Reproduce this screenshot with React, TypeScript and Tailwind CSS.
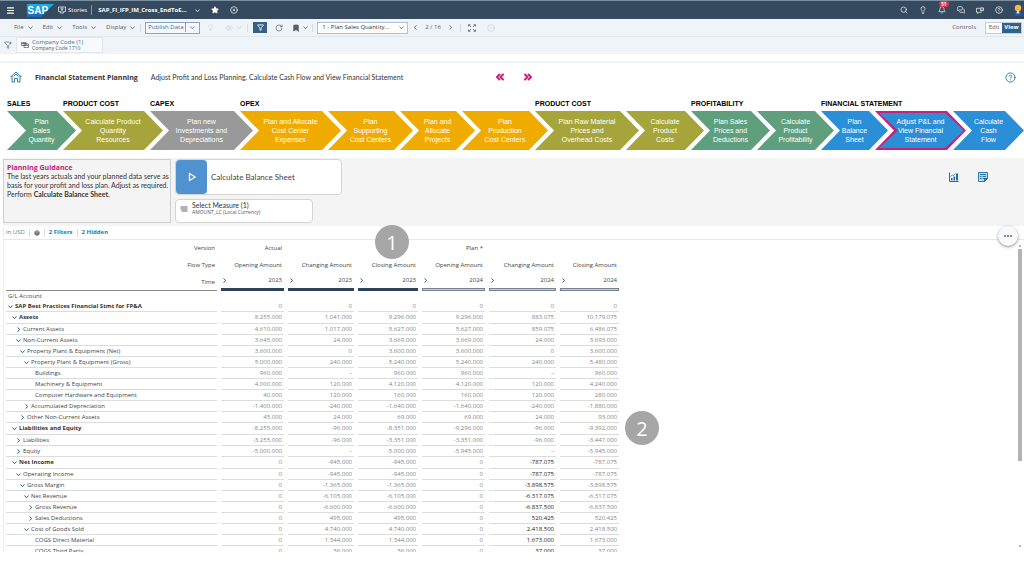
import type { ReactNode } from 'react'
import clsx from 'clsx'
import {
  Bell,
  Bookmark,
  ChevronsLeft,
  ChevronsRight,
  CircleCheck,
  CircleHelp,
  CircleX,
  Ellipsis,
  Filter,
  FunnelPlus,
  Lightbulb,
  Menu,
  MessagesSquare,
  RotateCw,
  Search,
  Star,
} from 'lucide-react'

// One arrow of the planning process
interface Step {
  lines: string[]
  color: string
  selected?: boolean
}

const GREEN = 'bg-[#5f9f7e]'
const OLIVE = 'bg-[#a5a53c]'
const GREY = 'bg-[#999999]'
const AMBER = 'bg-[#f0ab00]'
const BLUE = 'bg-[#2a8fd6]'

const STEPS: Step[] = [
  { lines: ['Plan', 'Sales', 'Quantity'], color: GREEN },
  { lines: ['Calculate Product', 'Quantity', 'Resources'], color: OLIVE },
  { lines: ['Plan new', 'Investments and', 'Depreciations'], color: GREY },
  { lines: ['Plan and Allocate', 'Cost Center', 'Expenses'], color: AMBER },
  { lines: ['Plan', 'Supporting', 'Cost Centers'], color: AMBER },
  { lines: ['Plan and', 'Allocate', 'Projects'], color: AMBER },
  { lines: ['Plan', 'Production', 'Cost Centers'], color: AMBER },
  { lines: ['Plan Raw Material', 'Prices and', 'Overhead Costs'], color: OLIVE },
  { lines: ['Calculate', 'Product', 'Costs'], color: OLIVE },
  { lines: ['Plan Sales', 'Prices and', 'Deductions'], color: GREEN },
  { lines: ['Calculate', 'Product', 'Profitability'], color: GREEN },
  { lines: ['Plan', 'Balance', 'Sheet'], color: BLUE },
  { lines: ['Adjust P&L and', 'View Financial', 'Statement'], color: BLUE, selected: true },
  { lines: ['Calculate', 'Cash', 'Flow'], color: BLUE },
]

const GROUPS = [
  { label: 'SALES', span: 'col-span-1' },
  { label: 'PRODUCT COST', span: 'col-span-1' },
  { label: 'CAPEX', span: 'col-span-1' },
  { label: 'OPEX', span: 'col-span-4' },
  { label: 'PRODUCT COST', span: 'col-span-2' },
  { label: 'PROFITABILITY', span: 'col-span-2' },
  { label: 'FINANCIAL STATEMENT', span: 'col-span-3' },
]

interface Row {
  name: string
  level: number
  open?: boolean
  values: string[]
}

const ROWS: Row[] = [
  { name: 'SAP Best Practices Financial Stmt for FP&A', level: 0, open: true, values: ['0', '0', '0', '0', '0', '0'] },
  { name: 'Assets', level: 1, open: true, values: ['8.255.000', '1.041.000', '9.296.000', '9.296.000', '883.075', '10.179.075'] },
  { name: 'Current Assets', level: 2, open: false, values: ['4.610.000', '1.017.000', '5.627.000', '5.627.000', '859.075', '6.486.075'] },
  { name: 'Non-Current Assets', level: 2, open: true, values: ['3.645.000', '24.000', '3.669.000', '3.669.000', '24.000', '3.693.000'] },
  { name: 'Property Plant & Equipment (Net)', level: 3, open: true, values: ['3.600.000', '0', '3.600.000', '3.600.000', '0', '3.600.000'] },
  { name: 'Property Plant & Equipment (Gross)', level: 4, open: true, values: ['5.000.000', '240.000', '5.240.000', '5.240.000', '240.000', '5.480.000'] },
  { name: 'Buildings', level: 5, values: ['960.000', '–', '960.000', '960.000', '–', '960.000'] },
  { name: 'Machinery & Equipment', level: 5, values: ['4.000.000', '120.000', '4.120.000', '4.120.000', '120.000', '4.240.000'] },
  { name: 'Computer Hardware and Equipment', level: 5, values: ['40.000', '120.000', '160.000', '160.000', '120.000', '280.000'] },
  { name: 'Accumulated Depreciation', level: 4, open: false, values: ['-1.400.000', '-240.000', '-1.640.000', '-1.640.000', '-240.000', '-1.880.000'] },
  { name: 'Other Non-Current Assets', level: 3, open: false, values: ['45.000', '24.000', '69.000', '69.000', '24.000', '93.000'] },
  { name: 'Liabilities and Equity', level: 1, open: true, values: ['-8.255.000', '-96.000', '-8.351.000', '-9.296.000', '-96.000', '-9.392.000'] },
  { name: 'Liabilities', level: 2, open: false, values: ['-3.255.000', '-96.000', '-3.351.000', '-3.351.000', '-96.000', '-3.447.000'] },
  { name: 'Equity', level: 2, open: false, values: ['-5.000.000', '–', '-5.000.000', '-5.945.000', '–', '-5.945.000'] },
  { name: 'Net Income', level: 1, open: true, values: ['0', '-945.000', '-945.000', '0', '-787.075', '-787.075'] },
  { name: 'Operating Income', level: 2, open: true, values: ['0', '-945.000', '-945.000', '0', '-787.075', '-787.075'] },
  { name: 'Gross Margin', level: 3, open: true, values: ['0', '-1.365.000', '-1.365.000', '0', '-3.898.575', '-3.898.575'] },
  { name: 'Net Revenue', level: 4, open: true, values: ['0', '-6.105.000', '-6.105.000', '0', '-6.317.075', '-6.317.075'] },
  { name: 'Gross Revenue', level: 5, open: false, values: ['0', '-6.600.000', '-6.600.000', '0', '-6.837.500', '-6.837.500'] },
  { name: 'Sales Deductions', level: 5, open: false, values: ['0', '495.000', '495.000', '0', '520.425', '520.425'] },
  { name: 'Cost of Goods Sold', level: 4, open: true, values: ['0', '4.740.000', '4.740.000', '0', '2.418.500', '2.418.500'] },
  { name: 'COGS Direct Material', level: 5, values: ['0', '1.344.000', '1.344.000', '0', '1.673.000', '1.673.000'] },
  { name: 'COGS Third Party', level: 5, values: ['0', '36.000', '36.000', '0', '37.000', '37.000'] },
]

// From this row on, the planned changes can be edited (dark figures)
const FIRST_EDITABLE = ROWS.findIndex(r => r.name === 'Net Income')
const EDITABLE_COL = 4

const COLUMNS = [
  { version: 'Actual', flow: 'Opening Amount', year: '2023' },
  { version: '', flow: 'Changing Amount', year: '2023' },
  { version: '', flow: 'Closing Amount', year: '2023' },
  { version: 'Plan *', flow: 'Opening Amount', year: '2024' },
  { version: '', flow: 'Changing Amount', year: '2024' },
  { version: '', flow: 'Closing Amount', year: '2024' },
]

const INDENT = ['pl-[2px]', 'pl-[6px]', 'pl-[10px]', 'pl-[14px]', 'pl-[18px]', 'pl-[22px]']

// Tight chevron: the stroke fills the whole box, unlike the padded lucide one
const CARETS = {
  down: 'M1 3 5 7.500 9 3',
  right: 'M3 1 7.500 5 3 9',
  left: 'M7 1 2.500 5 7 9',
}

function Caret({ dir = 'down', bold, className }: { dir?: keyof typeof CARETS; bold?: boolean; className?: string }) {
  return (
    <svg viewBox="0 0 10 10" className={clsx('size-[5px] shrink-0', className)} fill="none" stroke="currentColor" strokeWidth={bold ? 2 : 1.6}>
      <path d={CARETS[dir]} />
    </svg>
  )
}

function Logo() {
  return (
    <svg viewBox="0 0 54 26" className="h-[13px] w-[27px]" role="img" aria-label="SAP">
      <defs>
        <linearGradient id="sap" x1="0" y1="0" x2="0" y2="1">
          <stop offset="0" stopColor="#16b4ee" />
          <stop offset="1" stopColor="#1a66b8" />
        </linearGradient>
      </defs>
      <path d="M0 0H54L28 26H0Z" fill="url(#sap)" />
      <text x="1" y="20" fill="#fff" fontFamily="Liberation Sans, sans-serif" fontWeight="700" fontSize="20">
        SAP
      </text>
    </svg>
  )
}

function StoriesIcon() {
  return (
    <svg viewBox="0 0 16 16" className="size-[8px]" fill="none" stroke="currentColor" strokeWidth="1.4">
      <path d="M4 11H1V2h14v9h-3M6 5.5a2 2 0 1 0 4 0a2 2 0 1 0-4 0M4.500 14c0-3 1.500-4.500 3.500-4.500s3.500 1.500 3.500 4.500Z" />
    </svg>
  )
}

function HomeIcon() {
  return (
    <svg viewBox="0 0 24 24" className="size-[12px]" fill="none" stroke="currentColor" strokeWidth="2">
      <path d="M1 12 12 2l11 10M4 10v12h5v-7h6v7h5V10M7 11l5-5 5 5" />
    </svg>
  )
}

function ExpandIcon() {
  return (
    <svg viewBox="0 0 16 16" className="size-[8px]" fill="none" stroke="currentColor" strokeWidth="1.600">
      <path d="M1 5V1.500h4M1.500 1.500 6 6M11 1.500h4V5M14.500 1.500 10 6M1 11v3.500h4M1.500 14.500 6 10M11 14.500h4V11M14.500 14.500 10 10" />
    </svg>
  )
}

function CubeIcon() {
  return (
    <svg viewBox="0 0 16 16" className="size-[6px]" fill="#666" stroke="#444" strokeWidth="1">
      <path d="M8 1 14 4.500v7L8 15l-6-3.500v-7Z" />
      <path d="M2 4.500 8 8l6-3.500M8 8v7M5 2.700l6 3.500M11 2.700 5 6.200" stroke="#ddd" fill="none" />
    </svg>
  )
}

function DimensionIcon() {
  return (
    <svg viewBox="0 0 16 12" className="h-[6px] w-[8px] shrink-0" fill="none" stroke="currentColor" strokeWidth="1.400">
      <path d="M1 1h9v6H1ZM4 3.500h9M6 4h9v7H6Z" />
      <path d="M1 3h9M6 7h9" />
    </svg>
  )
}

function MeasureIcon() {
  return (
    <svg viewBox="0 0 16 12" className="h-[6px] w-[8px] shrink-0" fill="none" stroke="currentColor" strokeWidth="1.800">
      <path d="M1 2h14M1 6h14M3 10h12" />
    </svg>
  )
}

function ChartIcon() {
  return (
    <svg viewBox="0 0 20 20" className="size-[10px]" fill="#1a6fa5" stroke="#1a6fa5">
      <path d="M1 1v18h18" fill="none" strokeWidth="2" />
      <path d="M4 12h3v5H4ZM9 9h3v8H9ZM14 3h4v14h-4Z" stroke="none" />
      <path d="m3 9 4-3 3 1 3-4" fill="none" strokeWidth="1.400" />
    </svg>
  )
}

function ReportIcon() {
  return (
    <svg viewBox="0 0 20 20" className="size-[10px]" fill="none" stroke="#2273a8" strokeWidth="1.800">
      <path d="M1 1h18v11l-6 7H1Z" fill="#b9d4e6" />
      <path d="M4 5h12M4 9h3M9 9h7M4 13h3M9 13h3M13 19v-6h6" />
      <path d="M13 19v-6h6Z" fill="#2273a8" />
    </svg>
  )
}

function PresenterIcon() {
  return (
    <svg viewBox="0 0 18 16" className="h-[7px] w-[8px]" fill="none" stroke="currentColor" strokeWidth="1.600">
      <path d="M9 3H1v9h3v3l3-3h5v-2M10 2h7v6h-7ZM12 5h3" />
    </svg>
  )
}

function Avatar() {
  return (
    <svg viewBox="0 0 16 24" className="h-[12px] w-[8px]" role="img" aria-label="User">
      <path d="M0 24c0-7 3-9 8-9s8 2 8 9Z" fill="#1f56b5" />
      <circle cx="8" cy="8" r="6.500" fill="#f5b54a" />
      <path d="M6 13h4l1 6H5Z" fill="#f7d9a0" />
    </svg>
  )
}

function Divider() {
  return <span className="h-[8px] w-px bg-[#d5dce3]" />
}

function MenuButton({ children }: { children: ReactNode }) {
  return (
    <button type="button" className="flex items-center gap-[4px]">
      {children}
      <Caret />
    </button>
  )
}

function ShellBar() {
  return (
    <header className="flex h-[19px] items-center border-t border-[#7b8fa3] bg-[#354a5f] text-[6px] text-white">
      <button type="button" aria-label="Menu" className="ml-[6px]">
        <Menu className="size-[9px]" strokeWidth={3} />
      </button>
      <a href="#" className="ml-[12px]">
        <Logo />
      </a>
      <a href="#" className="ml-[4px] flex items-center gap-[2px]">
        <StoriesIcon />
        Stories
      </a>
      <span className="ml-[4px] h-[10px] w-px bg-[#8495a5]" />
      <h1 className="ml-[6px] font-bold">SAP_FI_IFP_IM_Cross_EndToE...</h1>
      <Caret className="ml-[8px]" />
      <Star className="ml-[11px] size-[8px] fill-white" />
      <CircleX className="ml-[11px] size-[8px]" />

      <div className="ml-auto mr-[2px] flex items-center gap-[11px]">
        <Search className="size-[8px]" />
        <Lightbulb className="size-[8px]" />
        <div className="relative">
          <Bell className="size-[8px]" />
          <span className="absolute -top-[5px] left-[1px] rounded-full bg-[#e0343c] px-[2px] text-[5px] font-bold leading-[6px]">
            51
          </span>
        </div>
        <MessagesSquare className="size-[8px]" />
        <PresenterIcon />
        <CircleHelp className="size-[8px]" />
        <Avatar />
      </div>
    </header>
  )
}

function Toolbar() {
  return (
    <div className="flex h-[18px] items-center border-b border-[#dfe6ec] bg-[#eff4f9] text-[6px] text-[#51606e]">
      <div className="ml-[14px] flex items-center gap-[10px]">
        <MenuButton>File</MenuButton>
        <MenuButton>Edit</MenuButton>
        <MenuButton>Tools</MenuButton>
        <MenuButton>Display</MenuButton>
      </div>
      <div className="ml-[5px] flex items-center gap-[4px]">
        <Divider />
        <div className="flex h-[12px] items-center divide-x divide-[#8aa5bf] border border-[#8aa5bf] bg-[#f6f9fc] text-[#466b8f]">
          <button type="button" className="w-[40px]">Publish Data</button>
          <button type="button" aria-label="Publish options" className="flex h-full w-[13px] items-center justify-center">
            <Caret />
          </button>
        </div>
      </div>
      <div className="ml-[7px] flex items-center gap-[11px] text-[#c9d2da]">
        <Lightbulb className="size-[7px]" />
        <MenuButton>
          <svg viewBox="0 0 16 12" className="h-[6px] w-[8px]" fill="none" stroke="currentColor" strokeWidth="1.500">
            <path d="M6 1 1 6l5 5V8h4V4H6ZM10 1l5 5-5 5" />
          </svg>
        </MenuButton>
      </div>
      <div className="ml-[5px] flex items-center">
        <Divider />
        <button type="button" aria-label="Filter" className="ml-[5px] flex h-[11px] w-[14px] items-center justify-center bg-[#346187] text-white">
          <Filter className="size-[7px]" strokeWidth={3} />
        </button>
        <button type="button" aria-label="Refresh" className="ml-[8px]">
          <RotateCw className="size-[8px]" />
        </button>
        <button type="button" aria-label="Bookmark" className="ml-[9px] flex items-center gap-[3px]">
          <Bookmark className="size-[8px] fill-[#51606e]" />
          <Caret />
        </button>
      </div>
      <div className="ml-[4px] flex items-center gap-[4px]">
        <Divider />
        <div className="relative flex items-center">
          <select aria-label="Page" className="h-[12px] w-[91px] appearance-none border border-[#b4bfca] bg-white pl-[4px] text-[6px] text-[#32363a]">
            <option>1 - Plan Sales Quantity...</option>
          </select>
          <Caret className="pointer-events-none absolute right-[4px]" />
        </div>
      </div>
      <nav className="ml-[5px] flex items-center gap-[7px]">
        <button type="button" aria-label="Previous page"><Caret dir="left" /></button>
        2 / 16
        <button type="button" aria-label="Next page"><Caret dir="right" /></button>
      </nav>
      <div className="ml-[7px] flex items-center gap-[7px]">
        <Divider />
        <ExpandIcon />
        <CircleCheck className="ml-[4px] size-[8px] text-[#c9d2da]" />
      </div>
      <button type="button" className="ml-auto mr-[9px]">Controls</button>
      <div className="mr-[2px] flex h-[12px] border border-[#c5ced7] bg-white">
        <button type="button" className="w-[16px]">Edit</button>
        <button type="button" className="w-[19px] bg-[#346187] font-bold text-white">View</button>
      </div>
    </div>
  )
}

function FilterBar() {
  return (
    <div className="flex h-[17px] items-center bg-[#eff4f9] pb-px">
      <FunnelPlus className="ml-[4px] size-[8px] text-[#51606e]" />
      <button type="button" className="ml-[4px] flex h-[16px] w-[87px] items-center gap-[3px] border border-[#e3e7eb] bg-[#f7f9fb] pl-[4px] text-left text-[#51606e]">
        <DimensionIcon />
        <span>
          <span className="block text-[6px] leading-[7px] text-[#35719f]">Company Code (1)</span>
          <span className="block text-[5px] leading-[5px]">Company Code 1710</span>
        </span>
      </button>
    </div>
  )
}

function StepArrow({ step }: { step: Step }) {
  const shape = '[clip-path:polygon(0_0,calc(100%-19px)_0,100%_50%,calc(100%-19px)_100%,0_100%,19px_50%)]'
  return (
    <button type="button" className={clsx('relative -mr-[13px] h-[39px] text-white', shape, step.selected ? 'bg-[#c6217b]' : step.color)}>
      {step.selected && (
        <span className={clsx('absolute inset-y-[2px] left-[4px] right-[2px]', shape, step.color)} />
      )}
      <span className="relative block">
        {step.lines.map(line => (
          <span key={line} className="block whitespace-nowrap leading-[9px]">{line}</span>
        ))}
      </span>
    </button>
  )
}

function ProcessFlow() {
  return (
    <div
      className="grid grid-cols-[56fr_87fr_90fr_88fr_72fr_62fr_73fr_91fr_65fr_66fr_64fr_54fr_78fr_58fr] pl-[7px] pr-[13px]
                 font-['Liberation_Sans',sans-serif] text-[7px]"
    >
      {GROUPS.map((group, i) => (
        <h3 key={i} className={clsx('h-[12px] whitespace-nowrap font-bold leading-[9px] text-black', group.span)}>
          {group.label}
        </h3>
      ))}
      {STEPS.map(step => (
        <StepArrow key={step.lines.join(' ')} step={step} />
      ))}
    </div>
  )
}

function GuidancePanel() {
  return (
    <section className="ml-[3px] flex h-[68px] gap-[4px] bg-[#f4f4f4] pt-px font-['Lato','Open_Sans',sans-serif]">
      <div className="h-[64px] w-[168px] border border-[#cfcfcf] pl-[3px] pt-[3px] text-[7px] leading-[9px] text-[#333]">
        <h3 className="font-['Open_Sans',sans-serif] font-bold text-[#c6217b]">Planning Guidance</h3>
        <p className="whitespace-nowrap">
          The last years actuals and your planned data serve as
          <br />
          basis for your profit and loss plan. Adjust as required.
          <br />
          Perform <b>Calculate Balance Sheet</b>.
        </p>
      </div>
      <div className="flex flex-col gap-[4px]">
        <button type="button" className="flex h-[36px] w-[167px] items-center rounded-sm border border-[#d4d4d4] bg-white text-[8px] text-[#444]">
          <span className="flex h-full w-[31px] items-center justify-center rounded-sm bg-[#4f92cf]">
            <svg viewBox="0 0 16 16" className="size-[10px]" fill="none" stroke="#fff" strokeWidth="2">
              <path d="M4 2.500 13 8l-9 5.500Z" />
            </svg>
          </span>
          <span className="ml-[4px]">Calculate Balance Sheet</span>
        </button>
        <button type="button" className="flex h-[24px] w-[138px] items-center gap-[4px] rounded-sm border border-[#d4d4d4] bg-white pb-[5px] pl-[4px] text-left text-[#555]">
          <MeasureIcon />
          <span>
            <span className="block text-[7px] leading-[7px] text-[#333]">Select Measure (1)</span>
            <span className="block font-['Open_Sans',sans-serif] text-[5px] leading-[6px]">AMOUNT_LC (Local Currency)</span>
          </span>
        </button>
      </div>
      <div className="ml-auto mr-[36px] flex h-[36px] items-center gap-[19px]">
        <button type="button" aria-label="Chart view"><ChartIcon /></button>
        <button type="button" aria-label="Report view"><ReportIcon /></button>
      </div>
    </section>
  )
}

function PlanTable() {
  return (
    <table className="table-fixed border-separate border-spacing-x-[4px] border-spacing-y-0 whitespace-nowrap text-[6px] leading-[9px] text-[#444]">
      <colgroup>
        <col className="w-[211px]" />
        <col className="w-[63px]" />
        <col className="w-[66px]" />
        <col className="w-[60px]" />
        <col className="w-[63px]" />
        <col className="w-[67px]" />
        <col className="w-[59px]" />
      </colgroup>
      <thead className="text-right">
        <tr className="h-[17px]">
          <th className="p-0 pr-[2px] font-normal">Version</th>
          {COLUMNS.map((c, i) => (
            <th key={i} className="p-0 pr-[2px] font-normal">{c.version}</th>
          ))}
        </tr>
        <tr className="h-[17px]">
          <th className="p-0 pr-[2px] font-normal">Flow Type</th>
          {COLUMNS.map((c, i) => (
            <th key={i} className="p-0 pr-[2px] font-normal">{c.flow}</th>
          ))}
        </tr>
        <tr className="h-[17px]">
          <th className="border-b border-[#8a8a8a] p-0 pr-[2px] font-normal">Time</th>
          {COLUMNS.map((c, i) => (
            <th key={i} className="p-0 font-normal">
              <div className="flex h-[17px] flex-col">
                <div className="flex grow items-center justify-between pb-[2px] pl-[1px] pr-[2px]">
                  <Caret dir="right" bold className="text-[#346187]" />
                  {c.year}
                </div>
                {/* Actuals: solid bar. Plan: hollow bar */}
                <div className={clsx('h-[3px] border', i < 3 ? 'border-[#2f4257] bg-[#2f4257]' : 'border-[#76828f] bg-[#c8ced6]')} />
              </div>
            </th>
          ))}
        </tr>
        <tr className="h-[10px]">
          <th className="p-0 pl-[2px] text-left font-normal">G/L Account</th>
        </tr>
      </thead>
      <tbody>
        {ROWS.map((row, r) => (
          <tr key={row.name} className={row.level === 1 ? 'h-[12px]' : 'h-[11px]'}>
            <th
              scope="row"
              className={clsx(
                'border-b border-[#dcdcdc] p-0 text-left',
                INDENT[row.level],
                row.level < 2 ? 'font-bold text-[#333]' : 'font-normal',
              )}
            >
              <span className="flex items-center gap-[2px]">
                {row.open === undefined ? (
                  <span className="w-[5px]" />
                ) : (
                  <button type="button" aria-expanded={row.open} aria-label={row.name} className="text-[#2f5f86]">
                    <Caret dir={row.open ? 'down' : 'right'} bold />
                  </button>
                )}
                {row.name}
              </span>
            </th>
            {row.values.map((value, c) => (
              <td
                key={c}
                className={clsx(
                  'border-b border-[#dcdcdc] p-0 pr-[2px] text-right',
                  c === EDITABLE_COL && r >= FIRST_EDITABLE ? 'text-[#222]' : 'text-[#858585]',
                )}
              >
                {value}
              </td>
            ))}
          </tr>
        ))}
      </tbody>
    </table>
  )
}

function Marker({ n, className }: { n: number; className: string }) {
  return (
    <span className={clsx('absolute flex size-[34px] items-center justify-center rounded-full bg-[#a6a6a6] text-[20px] text-white', className)}>
      {n}
    </span>
  )
}

export default function App() {
  return (
    <div className="min-h-screen bg-white font-['Open_Sans','Noto_Sans',sans-serif] leading-[9px]">
      <ShellBar />
      <Toolbar />
      <FilterBar />
      <main className="mt-[7px] border-t-2 border-[#eff2f5]">
        <div className="flex h-[28px] items-center pl-[10px] pr-[8px] text-[7px] text-[#333]">
          <a href="#" aria-label="Home" className="text-[#2b7cab]"><HomeIcon /></a>
          <h2 className="ml-[13px] font-bold">Financial Statement Planning</h2>
          <p className="ml-[13px] font-['Lato','Open_Sans',sans-serif]">
            Adjust Profit and Loss Planning. Calculate Cash Flow and View Financial Statement
          </p>
          <div className="ml-[91px] flex gap-[16px] text-[#c6217b]">
            <button type="button" aria-label="Previous"><ChevronsLeft className="size-[12px]" strokeWidth={4} /></button>
            <button type="button" aria-label="Next"><ChevronsRight className="size-[12px]" strokeWidth={4} /></button>
          </div>
          <button type="button" aria-label="Help" className="ml-auto text-[#2b7cab]">
            <CircleHelp className="size-[11px]" />
          </button>
        </div>
        <div className="pb-[8px] pt-[8px]">
          <ProcessFlow />
        </div>
        <GuidancePanel />

        <section className="relative ml-[3px] border-l border-[#eeeeee]">
          <div className="flex h-[14px] items-center gap-[4px] border-b border-[#e8e8e8] pl-[2px] text-[6px] text-[#777]">
            in USD
            <Divider />
            <CubeIcon />
            <Divider />
            <a href="#" className="font-bold text-[#1f7cab]">2 Filters</a>
            <Divider />
            <a href="#" className="font-bold text-[#1f7cab]">2 Hidden</a>
          </div>
          <div className="flex h-[312px] justify-between overflow-hidden">
            <div className="-ml-[2px]">
              <PlanTable />
            </div>
            <div className="mr-[2px] flex w-[4px] flex-col items-center pt-[5px]">
              <span className="size-[2px] bg-[#b5b5b5]" />
              <span className="mt-[2px] h-[212px] w-full bg-[#b3b3b3]" />
              <span className="mb-[5px] mt-auto size-[2px] bg-[#b5b5b5]" />
            </div>
          </div>
          <button
            type="button"
            aria-label="More"
            className="absolute right-[6px] top-0 flex size-[20px] items-center justify-center rounded-full bg-[#f8f9fa] text-[#4a6781] shadow-[0_1px_3px_rgba(0,0,0,0.45)]"
          >
            <Ellipsis className="size-[10px]" strokeWidth={3} />
          </button>
          <Marker n={1} className="left-[371px] -top-px" />
          <Marker n={2} className="left-[621px] top-[185px]" />
        </section>
      </main>
    </div>
  )
}
